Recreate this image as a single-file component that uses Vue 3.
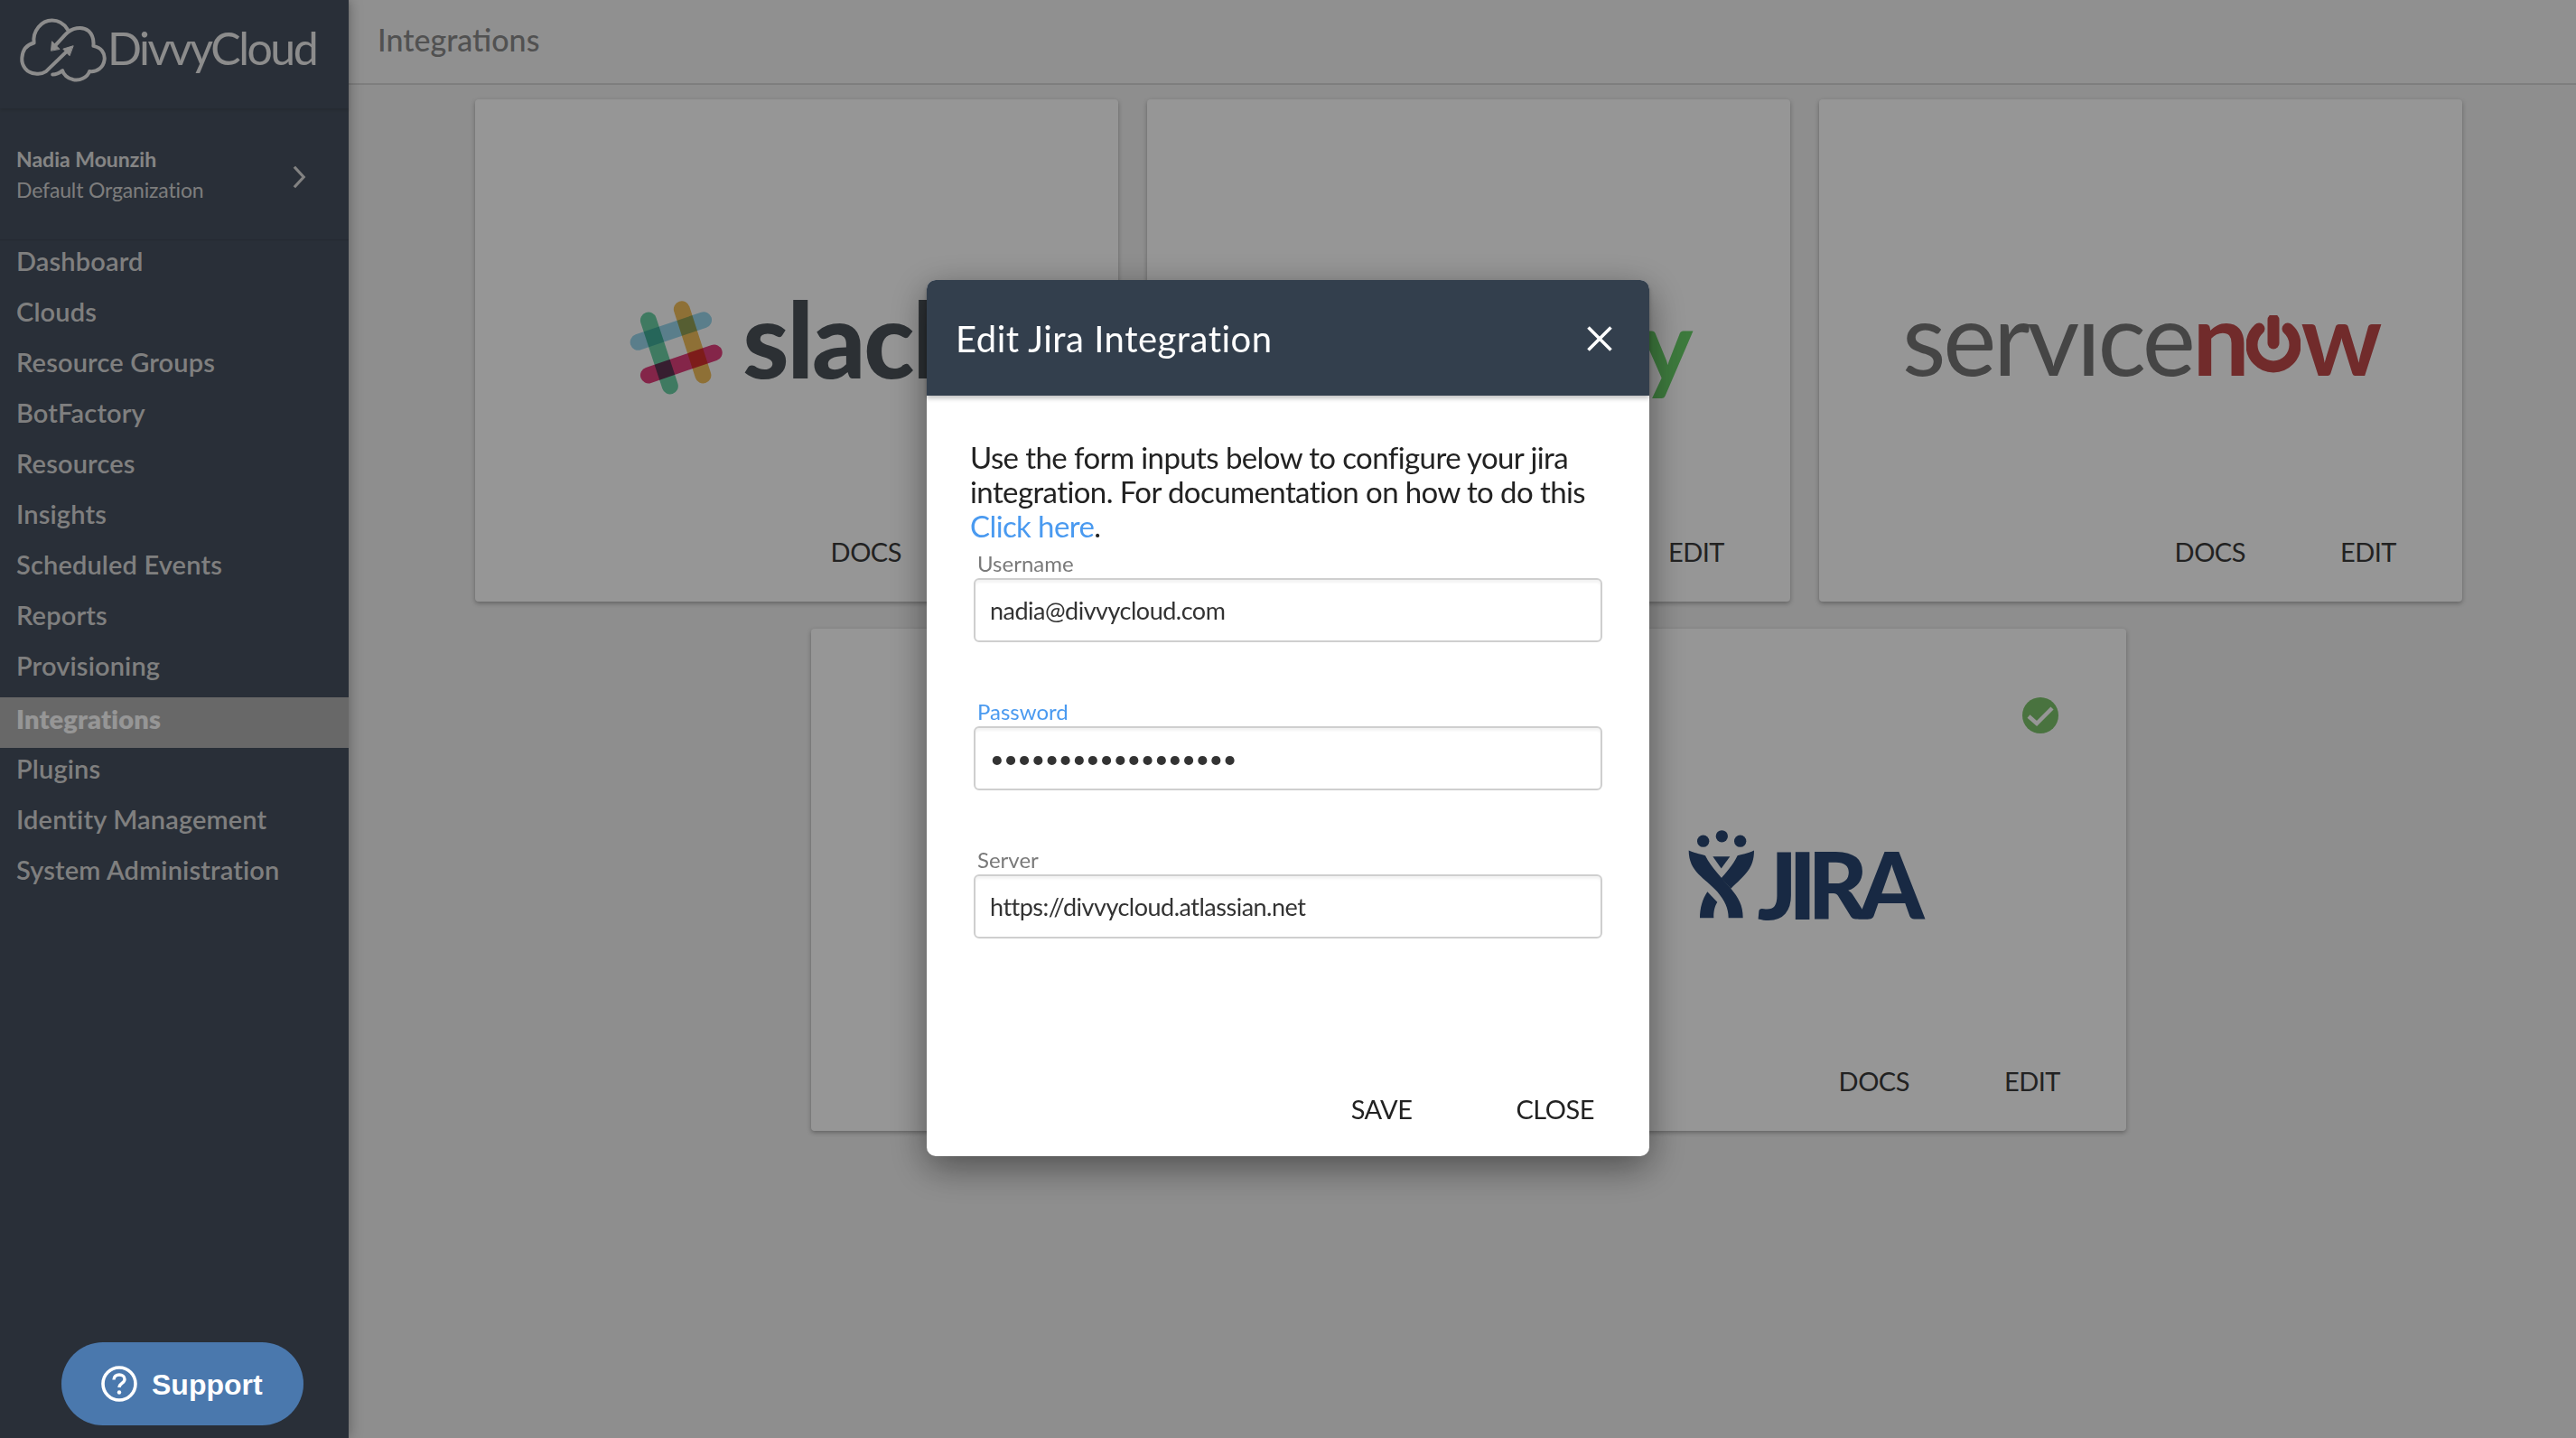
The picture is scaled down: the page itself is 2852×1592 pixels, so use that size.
<template>
  <div class="app">
    <aside class="sidebar">
      <div class="brand">
        <svg class="brand-mark" viewBox="60 55 295 215" fill="none" stroke="#eeeeee" stroke-width="12" stroke-linecap="round" stroke-linejoin="round">
          <path d="M228 160L150 235Q135 245 115 242C85 240 68 215 70 190C72 160 90 145 110 140C105 100 135 65 170 65C195 65 212 80 222 95" />
          <path d="M176 154L215 112C235 90 270 82 292 100C305 112 310 130 308 150C335 155 347 175 345 195C342 222 320 238 295 235C288 255 262 268 240 262C222 258 208 245 205 232C195 240 185 245 172 245" />
          <path d="M240 150L207 160L228 182Z" fill="#eeeeee" stroke-width="3" />
          <path d="M167 165L170 135L195 160Z" fill="#eeeeee" stroke-width="3" />
        </svg>
        <span class="brand-name">DivvyCloud</span>
      </div>
      <div class="user">
        <div>
          <div class="user-name">Nadia Mounzih</div>
          <div class="user-org">Default Organization</div>
        </div>
        <svg class="chevron" viewBox="0 0 16 26" fill="none" stroke="#dddddd" stroke-width="3.4">
          <path d="M2 1l11 12L2 25" />
        </svg>
      </div>
      <nav class="nav">
        <a v-for="item in navItems" :key="item" class="nav-item" :class="{ active: item === 'Integrations' }">{{ item }}</a>
      </nav>
      <button class="support">
        <svg class="support-icon" viewBox="0 0 40 40" fill="none" stroke="#fff" stroke-width="3.6">
          <circle cx="20" cy="20" r="18" />
          <path d="M14 15.5c0-3.6 2.7-5.5 6-5.5s6 2 6 5c0 4.5-6 4.3-6 9" stroke-width="3.4" />
          <circle cx="20" cy="29.5" r="2.2" fill="#fff" stroke="none" />
        </svg>
        <span class="support-label">Support</span>
      </button>
    </aside>

    <main class="main">
      <header class="topbar">Integrations</header>
      <section class="cards">
        <article v-for="card in cards" :key="card.id" class="card">
          <svg v-if="card.id === 'jira'" class="check" viewBox="0 0 40 40">
            <circle cx="20" cy="20" r="20" fill="#7dc36c" />
            <path d="M7 21l9 8 17-17" fill="none" stroke="#ffffff" stroke-width="4.5" />
          </svg>

          <div class="logo">
            <div v-if="card.id === 'slack'" class="slack">
              <svg class="slack-mark" viewBox="100 90 340 340" fill="none" stroke-width="54" stroke-linecap="round">
                <line class="blend" x1="178" y1="167" x2="250" y2="386" stroke="#6bcfa6" />
                <line class="blend" x1="289" y1="130" x2="360" y2="350" stroke="#f2bf5c" />
                <line class="blend" x1="144" y1="240" x2="362" y2="166" stroke="#9ad7ed" />
                <line class="blend" x1="178" y1="350" x2="397" y2="275" stroke="#e03f7d" />
              </svg>
              <span class="slack-name">slack</span>
            </div>
            <div v-else-if="card.id === 'pagerduty'" class="pagerduty">pagerduty</div>
            <div v-else-if="card.id === 'servicenow'" class="snow">
              <span class="snow-grey">servıce</span><span class="snow-red">n</span>
              <svg class="snow-power" viewBox="0 0 60 68" fill="none" stroke="#c14a4a" stroke-width="13" stroke-linecap="round">
                <path d="M14 15A24 24 0 1 0 46 15" />
                <path d="M30 5V31" />
              </svg>
              <span class="snow-red snow-w">w</span>
            </div>
            <div v-else-if="card.id === 'jira'" class="jira">
              <svg class="jira-mark" viewBox="145 535 228 305" fill="#294772">
                <circle cx="198" cy="577" r="20" />
                <circle cx="260" cy="561" r="20" />
                <circle cx="321" cy="577" r="20" />
                <path d="M150 608C175 618 195 622 205 625C225 665 262 700 290 735C315 765 330 790 330 832L282 832C282 800 270 775 245 745C205 700 150 680 150 608Z" />
                <path d="M367 608C345 618 325 622 312 625C295 660 270 685 258 700L290 735C335 690 367 670 367 608Z" />
                <path d="M212 745L245 780C235 795 232 815 233 832L187 832C187 800 195 770 212 745Z" />
                <path d="M230 628L287 628L258 668Z" />
              </svg>
              <span class="jira-name">JIRA</span>
            </div>
          </div>

          <div class="card-actions">
            <a>DOCS</a>
            <a>EDIT</a>
          </div>
        </article>
      </section>
    </main>

    <div class="overlay">
      <div class="modal">
        <div class="modal-head">
          <span>Edit Jira Integration</span>
          <svg class="close" viewBox="0 0 28 28" stroke="#fff" stroke-width="3.6">
            <path d="M1.5 1.5l25 25M26.5 1.5l-25 25" />
          </svg>
        </div>
        <div class="modal-body">
          <p class="intro">
            Use the form inputs below to configure your jira<br />
            integration. For documentation on how to do this<br />
            <a class="link">Click here</a>.
          </p>
          <div v-for="field in fields" :key="field.label" class="field" :class="{ focused: field.focused }">
            <label>{{ field.label }}</label>
            <input :type="field.type" :value="field.value" readonly />
          </div>
        </div>
        <div class="modal-foot">
          <a>SAVE</a>
          <a>CLOSE</a>
        </div>
      </div>
    </div>
  </div>
</template>

<script setup>
const navItems = [
  'Dashboard',
  'Clouds',
  'Resource Groups',
  'BotFactory',
  'Resources',
  'Insights',
  'Scheduled Events',
  'Reports',
  'Provisioning',
  'Integrations',
  'Plugins',
  'Identity Management',
  'System Administration',
];

const cards = [
  { id: 'slack' },
  { id: 'pagerduty' },
  { id: 'servicenow' },
  { id: 'other' },
  { id: 'jira' },
];

const fields = [
  { label: 'Username', type: 'text', value: 'nadia@divvycloud.com' },
  { label: 'Password', type: 'password', value: 'divvycloudpassword', focused: true },
  { label: 'Server', type: 'text', value: 'https://divvycloud.atlassian.net' },
];
</script>

<style>
html,
body {
  margin: 0;
  overflow: hidden;
}
</style>

<style scoped>
.app {
  display: flex;
  width: 2852px;
  height: 1592px;
  overflow: hidden;
  font-family: Lato, "Liberation Sans", sans-serif;
}

.sidebar {
  width: 386px;
  flex: none;
  display: flex;
  flex-direction: column;
  background: #47515f;
  box-shadow: 0 0 14px rgba(0, 0, 0, 0.35);
  position: relative;
}

.brand {
  height: 120px;
  display: flex;
  align-items: flex-start;
  box-shadow: 0 2px 3px rgba(0, 0, 0, 0.12);
  color: #eeeeee;
}

.brand-mark {
  width: 98px;
  height: 72px;
  margin: 19px 0 0 21px;
}

.brand-name {
  font-size: 50px;
  line-height: 60px;
  margin: 23px 0 0 0;
  letter-spacing: -2.5px;
}

.user {
  height: 145px;
  display: flex;
  align-items: center;
  justify-content: space-between;
  padding: 0 47px 0 18px;
  box-shadow: 0 1px 1px rgba(0, 0, 0, 0.1);
}

.user-name {
  font-size: 23px;
  line-height: 34px;
  font-weight: 700;
  color: #e2e2e2;
}

.user-org {
  font-size: 23px;
  line-height: 34px;
  letter-spacing: -0.15px;
  color: #d4d4d4;
}

.chevron {
  width: 15px;
  height: 26px;
  margin-top: 6px;
}

.nav {
  display: flex;
  flex-direction: column;
  margin-top: -4px;
}

.nav-item {
  height: 56px;
  line-height: 56px;
  padding-left: 18px;
  font-size: 29px;
  font-weight: 600;
  letter-spacing: 0.15px;
  color: #d9d9d9;
}

.nav-item.active {
  margin: 7px 0 -5px;
  line-height: 48px;
  background: #b2b2b2;
  color: #ffffff;
  font-weight: 800;
}

.support {
  position: absolute;
  z-index: 20;
  left: 68px;
  top: 1486px;
  width: 268px;
  height: 92px;
  border: 0;
  border-radius: 46px;
  background: #4a78ad;
  color: #fff;
  font: bold 32px "Liberation Sans", Arial, sans-serif;
  display: flex;
  align-items: center;
  gap: 16px;
  padding: 0 0 0 44px;
}

.support-icon {
  width: 40px;
  height: 40px;
}

.support-label {
  margin-top: 2px;
}

.main {
  flex: 1;
  background: #f1f1f1;
  min-width: 0;
}

.topbar {
  height: 92px;
  line-height: 88px;
  padding-left: 32px;
  font-size: 34px;
  font-weight: 500;
  color: #8a8a8a;
  background: #f5f5f5;
  border-bottom: 2px solid #d6d6d6;
}

.cards {
  display: flex;
  flex-wrap: wrap;
  justify-content: center;
  gap: 30px 32px;
  padding: 16px 126px 0 140px;
}

.card {
  position: relative;
  width: 712px;
  height: 556px;
  background: #fff;
  border-radius: 4px;
  box-shadow: 0 2px 5px rgba(0, 0, 0, 0.3);
  display: flex;
  flex-direction: column;
}

.check {
  position: absolute;
  left: 597px;
  top: 76px;
  width: 40px;
  height: 40px;
}

.logo {
  height: 200px;
  margin-top: 175px;
  display: flex;
  align-items: center;
  justify-content: center;
}

.slack {
  display: flex;
  align-items: center;
}

.slack-mark {
  width: 113px;
  height: 113px;
  isolation: isolate;
}

.blend {
  mix-blend-mode: multiply;
}

.slack-name {
  font-size: 116px;
  font-weight: 900;
  color: #4c5359;
  margin: 0 0 22px 17px;
  letter-spacing: -2px;
  line-height: 113px;
}

.pagerduty {
  font-size: 110px;
  font-weight: 700;
  line-height: 130px;
  color: #68cf68;
  margin-top: -10px;
}

.snow {
  display: flex;
  align-items: center;
  font-size: 112px;
  line-height: 130px;
  letter-spacing: -3.3px;
  margin-top: -24px;
}

.snow-grey {
  color: #767676;
}

.snow-red {
  color: #c14a4a;
  font-weight: 700;
}

.snow-power {
  width: 60px;
  height: 68px;
  margin-top: 20px;
}

.jira {
  display: flex;
  align-items: flex-start;
  margin: 4px 8px 0 0;
}

.jira-mark {
  width: 76px;
  height: 102px;
}

.jira-name {
  font-size: 103px;
  font-weight: 900;
  line-height: 102px;
  letter-spacing: -10px;
  color: #294772;
  margin: 10px 0 0 2px;
}

.card-actions {
  margin-top: auto;
  height: 56px;
  display: flex;
  justify-content: flex-end;
  gap: 105px;
  padding-right: 73px;
  margin-bottom: 27px;
  font-size: 29px;
  letter-spacing: -0.5px;
  line-height: 56px;
  color: #3a3a3a;
}

.overlay {
  position: fixed;
  inset: 0;
  z-index: 10;
  background: rgba(0, 0, 0, 0.41);
  display: flex;
  align-items: center;
  justify-content: center;
}

.modal {
  width: 800px;
  height: 970px;
  margin-top: -3px;
  background: #fff;
  border-radius: 10px;
  box-shadow: 0 12px 40px rgba(0, 0, 0, 0.45);
  display: flex;
  flex-direction: column;
}

.modal-head {
  height: 128px;
  box-sizing: border-box;
  padding: 3px 41px 0 32px;
  flex: none;
  background: #333f4d;
  border-radius: 10px 10px 0 0;
  box-shadow: 0 3px 5px rgba(0, 0, 0, 0.25);
  display: flex;
  align-items: center;
  justify-content: space-between;
  font-size: 40px;
  letter-spacing: 0.5px;
  color: #fff;
}

.close {
  width: 28px;
  height: 28px;
}

.modal-body {
  padding: 49px 52px 0;
}

.intro {
  margin: 0 0 11px -4px;
  font-size: 33px;
  line-height: 38px;
  letter-spacing: -0.6px;
  color: #222;
}

.link {
  color: #4a9af0;
}

.field {
  margin-bottom: 65px;
}

.field label {
  display: block;
  height: 24px;
  line-height: 24px;
  margin: 0 0 4px 4px;
  font-size: 24px;
  color: #7a7a7a;
}

.field.focused label {
  color: #4a9af0;
}

.field input {
  display: block;
  width: 100%;
  box-sizing: border-box;
  height: 71px;
  padding: 0 16px;
  border: 2px solid #cfcfcf;
  border-radius: 6px;
  box-shadow: inset 0 3px 3px rgba(0, 0, 0, 0.05);
  outline: none;
  font-family: Lato, "Liberation Sans", sans-serif;
  font-size: 27px;
  letter-spacing: -0.5px;
  color: #333;
}

.modal-foot {
  margin-top: auto;
  height: 52px;
  margin-bottom: 26px;
  display: flex;
  justify-content: flex-end;
  gap: 115px;
  padding-right: 61px;
  font-size: 29px;
  letter-spacing: -0.5px;
  line-height: 52px;
  color: #222;
}
</style>
